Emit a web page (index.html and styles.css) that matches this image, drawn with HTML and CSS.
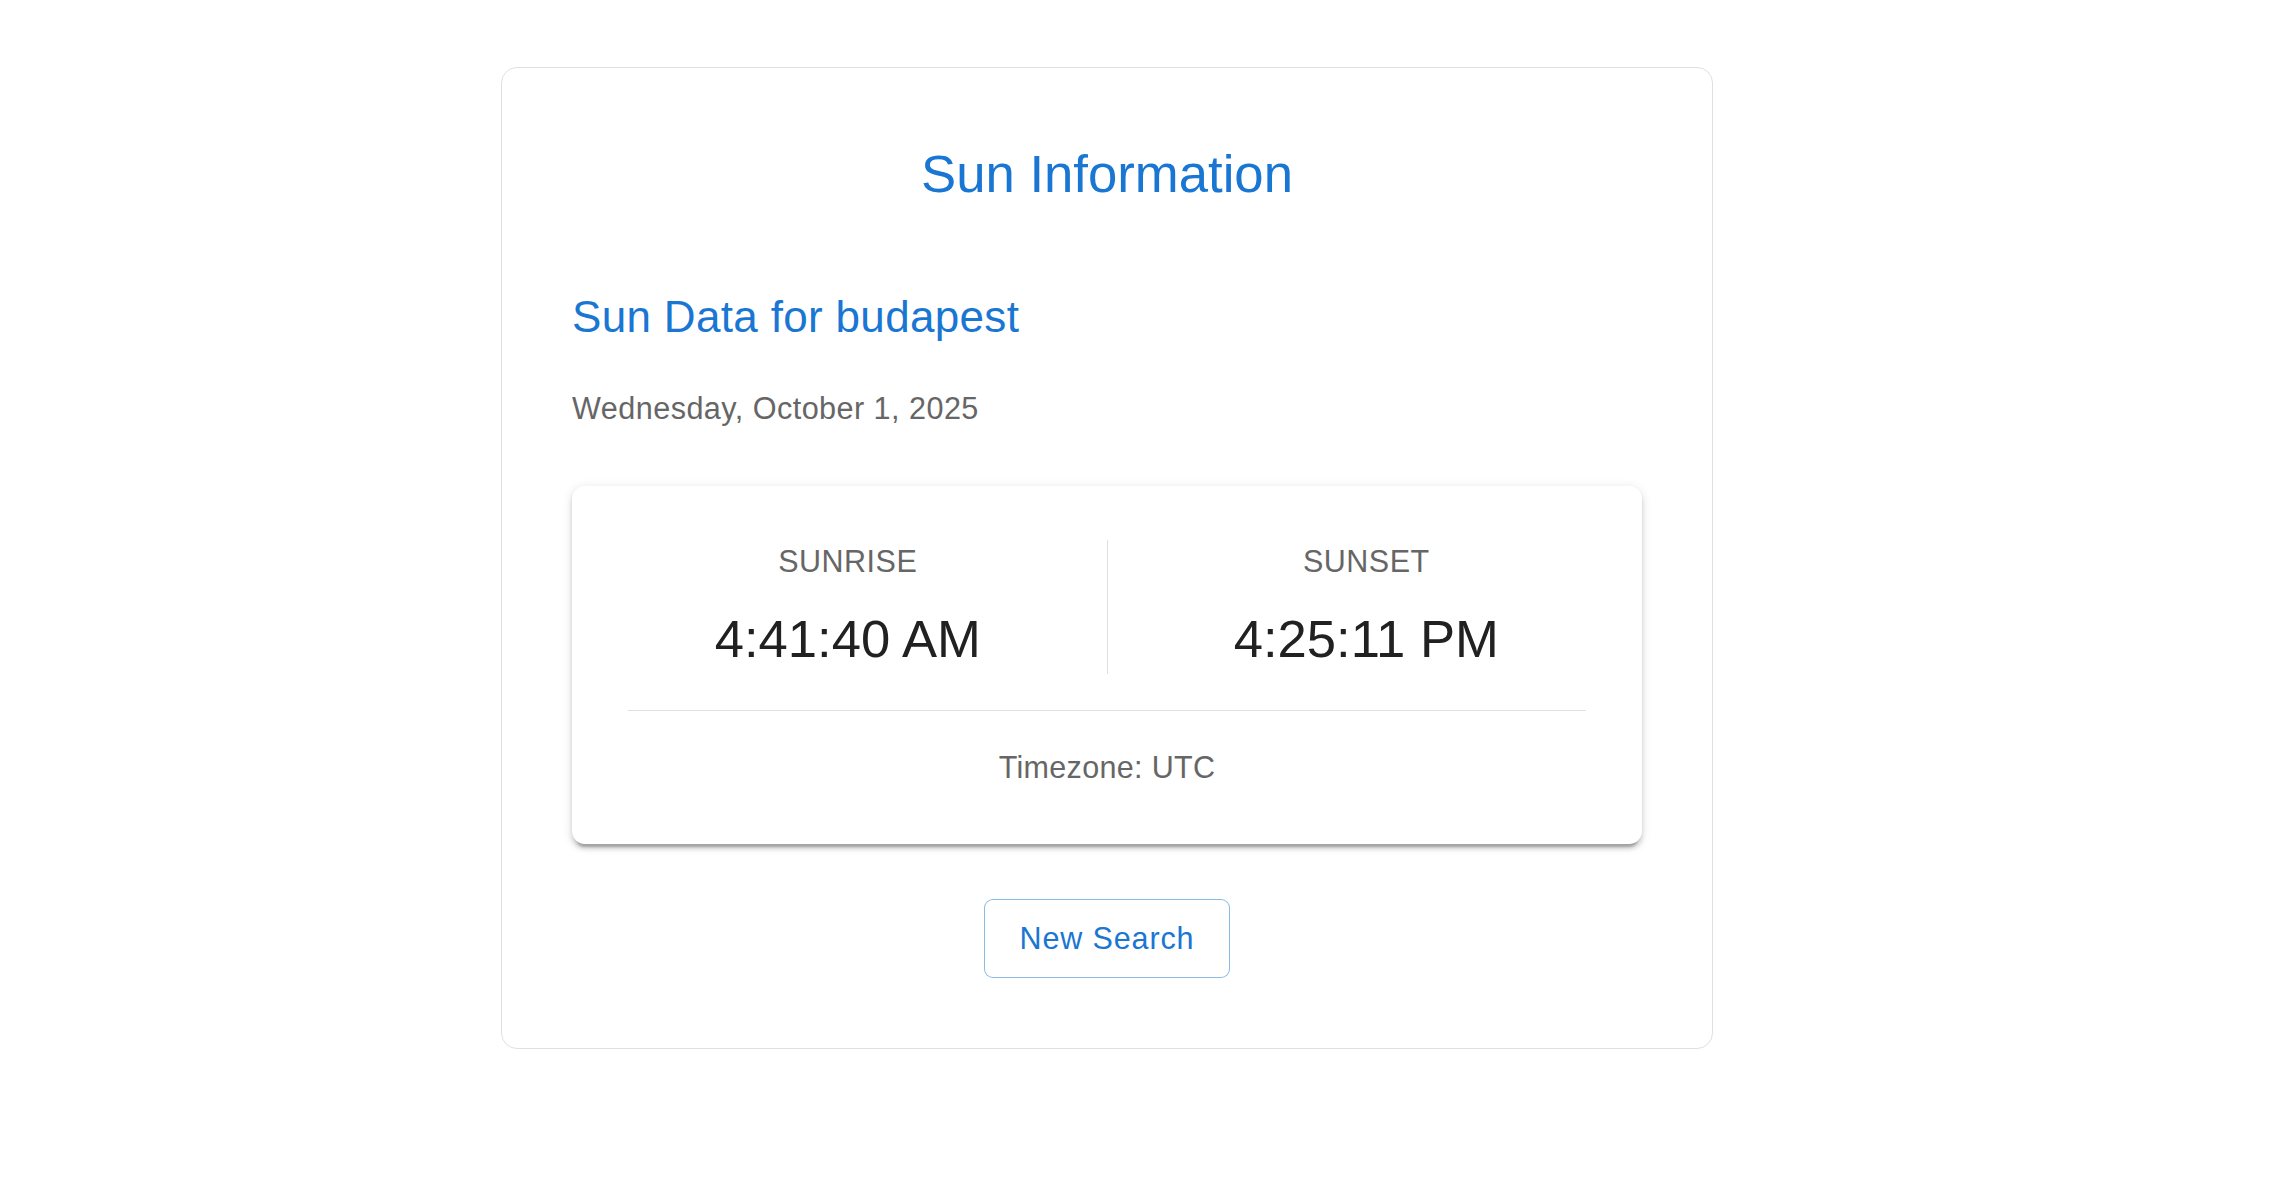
FILE: index.html
```html
<!DOCTYPE html>
<html lang="en">
<head>
<meta charset="utf-8">
<title>Sun Information</title>
<link rel="stylesheet" href="styles.css">
</head>
<body>
<div class="page">
  <div class="card">
    <h1 class="title">Sun Information</h1>
    <h2 class="subtitle">Sun Data for budapest</h2>
    <p class="date">Wednesday, October 1, 2025</p>
    <div class="sun-card">
      <div class="sun-row">
        <div class="sun-col">
          <div class="label">SUNRISE</div>
          <div class="time">4:41:40 AM</div>
        </div>
        <div class="vdivider"></div>
        <div class="sun-col">
          <div class="label">SUNSET</div>
          <div class="time">4:25:11 PM</div>
        </div>
      </div>
      <hr class="hdivider">
      <p class="tz">Timezone: UTC</p>
    </div>
    <div class="actions">
      <button class="btn" type="button">New Search</button>
    </div>
  </div>
</div>
</body>
</html>
```

FILE: styles.css
```css
* { box-sizing: border-box; }
html, body {
  margin: 0;
  padding: 0;
  background: #ffffff;
  font-family: "Liberation Sans", Arial, Helvetica, sans-serif;
}
.page {
  padding: 67px 0 0 501px;
}
.card {
  width: 1212px;
  border: 1px solid #e0e0e0;
  border-radius: 16px;
  padding: 71px 70px 70px 70px;
  background: #fff;
}
.title {
  margin: 0;
  text-align: center;
  color: #1976d2;
  font-weight: 400;
  font-size: 52.7px;
  line-height: 69.4px;
}
.subtitle {
  margin: 74px 0 0 0;
  color: #1976d2;
  font-weight: 400;
  font-size: 44px;
  line-height: 69.8px;
  letter-spacing: 0.33px;
}
.date {
  margin: 35px 0 0 0;
  color: #666666;
  font-size: 30.6px;
  line-height: 43.6px;
  letter-spacing: 0.45px;
}
.sun-card {
  margin-top: 55px;
  background: #fff;
  border-radius: 13px;
  padding: 54px 17px 54px 17px;
  box-shadow: 0 6.5px 2px -4.4px rgba(0,0,0,0.2), 0 4.4px 4.4px 0 rgba(0,0,0,0.14), 0 2px 11px 0 rgba(0,0,0,0.12);
}
.sun-row {
  display: flex;
  align-items: stretch;
}
.sun-col {
  flex: 1 1 0;
  display: flex;
  flex-direction: column;
  align-items: center;
  padding-bottom: 4px;
}
.vdivider {
  width: 1px;
  background: #e0e0e0;
}
.label {
  color: #666666;
  font-size: 30.5px;
  line-height: 43.6px;
  letter-spacing: 0.5px;
}
.time {
  margin-top: 25px;
  color: #212121;
  font-size: 52.6px;
  line-height: 62px;
}
.hdivider {
  margin: 36px 39px 0 39px;
  border: 0;
  border-top: 1px solid #e0e0e0;
  height: 0;
}
.tz {
  margin: 35px 0 0 0;
  text-align: center;
  color: #666666;
  font-size: 30.5px;
  line-height: 43.6px;
  letter-spacing: 0.33px;
}
.actions {
  display: flex;
  justify-content: center;
  margin-top: 55px;
}
.btn {
  font-family: "Liberation Sans", Arial, Helvetica, sans-serif;
  font-size: 30.5px;
  line-height: 53.4px;
  letter-spacing: 0.87px;
  white-space: nowrap;
  color: #1976d2;
  background: #fff;
  border: 1px solid rgba(25,118,210,0.5);
  border-radius: 9px;
  padding: 11.8px 35px;
  cursor: pointer;
}
```
